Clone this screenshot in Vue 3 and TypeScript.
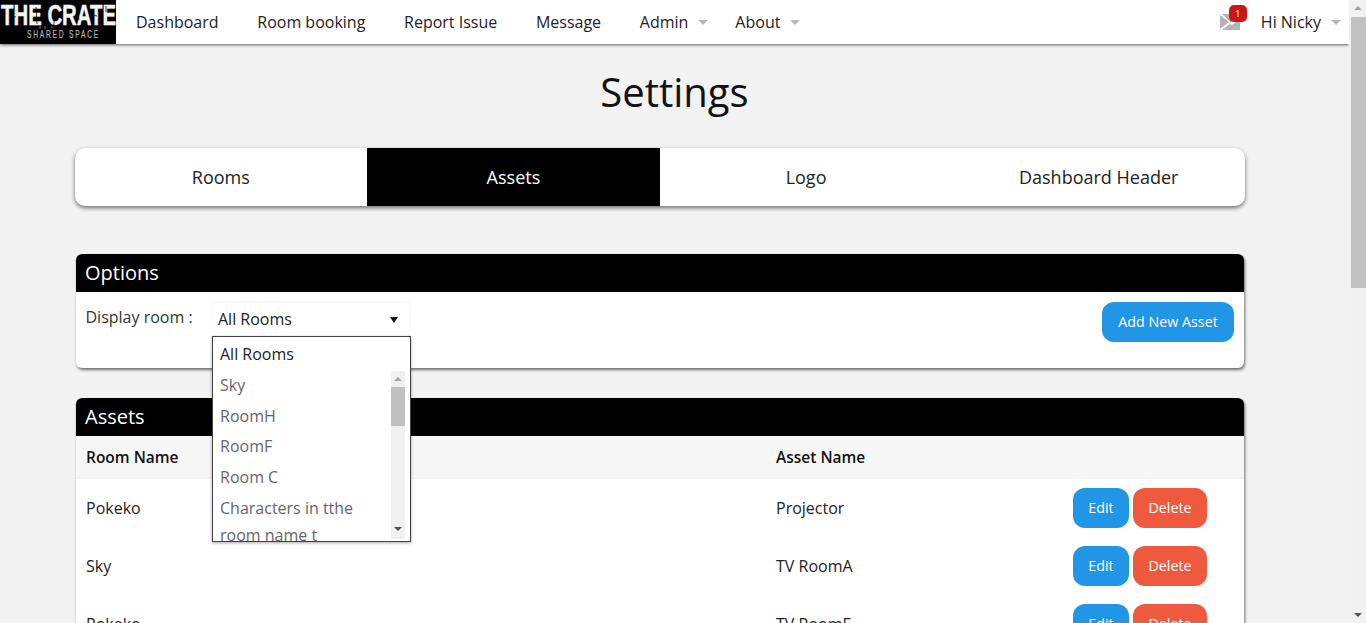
<script setup lang="ts">
const navItems = [
  { label: 'Dashboard', caret: false },
  { label: 'Room booking', caret: false },
  { label: 'Report Issue', caret: false },
  { label: 'Message', caret: false },
  { label: 'Admin', caret: true },
  { label: 'About', caret: true },
]
const tabs = ['Rooms', 'Assets', 'Logo', 'Dashboard Header']
const rooms = ['Sky', 'RoomH', 'RoomF', 'Room C']
const rows = [
  { room: 'Pokeko', asset: 'Projector' },
  { room: 'Sky', asset: 'TV RoomA' },
  { room: 'Pokeko', asset: 'TV RoomE' },
]
</script>

<template>
  <div class="viewport">
    <div class="page">
      <nav class="nav">
        <svg class="logo" width="116" height="44" viewBox="0 0 116 44">
          <rect width="116" height="44" fill="#000" />
          <text x="1" y="25" textLength="115" lengthAdjust="spacingAndGlyphs" class="logo-main">THE CRATE</text>
          <path d="M36 7 L37 24 M44 12 L43 25 M54 18 L54 25 M63 5 L62 13 M77 9 L79 20 M12 16 L16 17 M92 15 L97 16 M106 6 L106 12" stroke="#000" stroke-width="1" opacity="0.75" />
          <path d="M40 26 L40 29 M45 26 L45 29 M52 26 L52 28" stroke="#777" stroke-width="1" />
          <text x="27" y="38" textLength="73" lengthAdjust="spacingAndGlyphs" class="logo-sub">SHARED SPACE</text>
        </svg>
        <ul class="menu">
          <li v-for="item in navItems" :key="item.label" class="menu-item">
            {{ item.label }}<i v-if="item.caret" class="caret"></i>
          </li>
        </ul>
        <div class="user">
          <div class="mail">
            <svg width="20" height="16" viewBox="0 0 20 16">
              <path d="M0 1 L9 8 L0 15 Z M2 0 H20 V2 L11 8.5 Z M2 16 L10 10 L12 11 L20 5 V16 Z" fill="#b4b4b4" />
            </svg>
            <span class="badge">1</span>
          </div>
          <span class="hi">Hi Nicky<i class="caret user-caret"></i></span>
        </div>
      </nav>

      <h1 class="title">Settings</h1>

      <div class="tabs">
        <div v-for="tab in tabs" :key="tab" class="tab" :class="{ active: tab === 'Assets' }">{{ tab }}</div>
      </div>

      <section class="panel options">
        <header class="panel-head">Options</header>
        <div class="options-body">
          <span class="display-label">Display room :</span>
          <div class="select-wrap">
            <div class="select">All Rooms<i class="select-arrow"></i></div>
            <div class="dropdown">
              <div class="dd-first">All Rooms</div>
              <div class="dd-scroll">
                <div class="dd-list">
                  <div v-for="r in rooms" :key="r" class="dd-item">{{ r }}</div>
                  <div class="dd-item dd-wrap">Characters in tthe room name t</div>
                </div>
                <div class="dd-bar">
                  <i class="arrow-up small"></i>
                  <div class="dd-thumb"></div>
                  <i class="arrow-down small"></i>
                </div>
              </div>
            </div>
          </div>
          <button class="btn blue add">Add New Asset</button>
        </div>
      </section>

      <section class="panel assets">
        <header class="panel-head">Assets</header>
        <div class="row thead">
          <span class="col-room">Room Name</span>
          <span class="col-asset">Asset Name</span>
        </div>
        <div v-for="(row, i) in rows" :key="i" class="row">
          <span class="col-room">{{ row.room }}</span>
          <span class="col-asset">{{ row.asset }}</span>
          <span class="actions">
            <button class="btn blue edit">Edit</button>
            <button class="btn red delete">Delete</button>
          </span>
        </div>
      </section>
    </div>

    <div class="scrollbar">
      <i class="arrow-up"></i>
      <div class="thumb"></div>
      <div class="track"></div>
      <i class="arrow-down"></i>
    </div>
  </div>
</template>

<style>
html, body { margin: 0; height: 100%; overflow: hidden; background: #f2f2f2; }
</style>

<style scoped>
.viewport {
  display: flex;
  height: 623px;
  overflow: hidden;
  background: #f2f2f2;
  font-family: "Open Sans", sans-serif;
  font-size: 16px;
  color: #222;
}
.page { width: 1349px; flex: none; overflow: hidden; }

.nav {
  display: flex;
  align-items: center;
  height: 44px;
  background: #fff;
  box-shadow: 0 1px 3px rgba(0, 0, 0, 0.6);
  position: relative;
}
.logo { display: block; flex: none; }
.logo-main {
  font-family: "Liberation Sans", sans-serif;
  font-weight: 700;
  font-size: 29px;
  fill: #f4f4f4;
  stroke: #f4f4f4;
  stroke-width: 0.5px;
}
.logo-sub {
  font-family: "Liberation Sans", sans-serif;
  font-size: 11.5px;
  letter-spacing: 3px;
  fill: #b5b5b5;
  stroke: #b5b5b5;
  stroke-width: 0.2px;
}
.menu {
  display: flex;
  list-style: none;
  margin: 0;
  padding: 0 0 0 20px;
  gap: 38.7px;
}
.menu-item { display: flex; align-items: center; white-space: nowrap; }
.caret {
  display: inline-block;
  width: 0;
  height: 0;
  border-left: 5px solid transparent;
  border-right: 5px solid transparent;
  border-top: 5px solid #b8b8b8;
  margin-left: 9.5px;
  margin-right: -11.2px;
}
.user { margin-left: auto; display: flex; align-items: center; padding-right: 8px; }
.mail { position: relative; width: 20px; height: 16px; margin-right: 21px; }
.mail svg { display: block; }
.badge {
  position: absolute;
  left: 9px;
  top: -9px;
  width: 18px;
  height: 17px;
  border-radius: 5px;
  background: #cc1517;
  color: #fff;
  font-size: 9px;
  line-height: 17px;
  text-align: center;
}
.hi { display: flex; align-items: center; }
.user-caret { margin-left: 10px; margin-right: 0; }

.title {
  margin: 0;
  padding-top: 19px;
  height: 85px;
  box-sizing: border-box;
  text-align: center;
  font-weight: 400;
  font-size: 40px;
  line-height: 58px;
  color: #111;
}

.tabs {
  display: flex;
  width: 1170.5px;
  height: 58px;
  margin: 19px 0 0 74.5px;
  background: #fff;
  border-radius: 10px;
  box-shadow: 0 2px 4px rgba(0, 0, 0, 0.55);
  overflow: hidden;
  font-size: 18px;
}
.tab {
  flex: 1;
  display: flex;
  align-items: center;
  justify-content: center;
  color: #222;
}
.tab.active { background: #000; color: #fff; }

.panel {
  width: 1168px;
  margin-left: 76px;
  background: #fff;
  border-radius: 6px;
  box-shadow: 1px 2px 3px rgba(0, 0, 0, 0.55);
}
.panel-head {
  height: 38px;
  background: #000;
  color: #fff;
  border-radius: 6px 6px 0 0;
  font-size: 20px;
  line-height: 38px;
  padding-left: 9px;
}
.options { margin-top: 48px; height: 114px; position: relative; z-index: 2; }
.options-body { position: relative; display: flex; padding: 10px 10px 10px 9.5px; }
.display-label { width: 126.5px; line-height: 30px; color: #333; }
.select-wrap { position: relative; width: 199px; height: 33px; margin-top: 1px; }
.select {
  height: 33px;
  line-height: 33px;
  margin: 0 1px;
  padding-left: 5px;
  background: #fff;
  border-radius: 3px;
  box-shadow: 0 0 2px rgba(0, 0, 0, 0.12);
  position: relative;
  box-sizing: border-box;
}
.select-arrow {
  position: absolute;
  right: 12px;
  top: 14px;
  border-left: 4px solid transparent;
  border-right: 4px solid transparent;
  border-top: 6px solid #111;
}
.dropdown {
  position: absolute;
  left: 0;
  top: 33px;
  width: 199px;
  height: 206px;
  box-sizing: border-box;
  background: #fff;
  border: 1px solid #444;
  box-shadow: 0 1px 3px rgba(0, 0, 0, 0.35);
  overflow: hidden;
}
.dd-first { height: 33px; line-height: 35px; padding-left: 7px; color: #222; }
.dd-scroll { display: flex; height: 171px; }
.dd-list { flex: 1; overflow: hidden; color: #666; padding-left: 7px; }
.dd-item { height: 30.6px; line-height: 30.6px; }
.dd-wrap { height: auto; line-height: 27px; padding-top: 3px; width: 150px; }
.dd-bar {
  width: 14px;
  margin: 1px 5px 2px 0;
  background: #f0f0f0;
  display: flex;
  flex-direction: column;
  align-items: center;
  position: relative;
}
.dd-thumb { width: 14px; height: 39px; margin-top: 16px; background: #c0c0c0; }
.arrow-up, .arrow-down {
  position: absolute;
  width: 0;
  height: 0;
  border-left: 4px solid transparent;
  border-right: 4px solid transparent;
}
.arrow-up { top: 6px; border-bottom: 4px solid #a3a3a3; }
.arrow-down { bottom: 6px; border-top: 4px solid #505050; }
.arrow-up.small { top: 6px; }
.arrow-down.small { bottom: 8px; }

.btn {
  border: none;
  color: #fff;
  font-family: inherit;
  font-size: 14.3px;
  height: 40px;
  padding: 0 0 2px;
  border-radius: 12px;
}
.blue { background: #2196e6; }
.red { background: #ef5a3f; }
.add { width: 132px; margin-left: auto; }
.edit { width: 56px; }
.delete { width: 74px; margin-left: 4px; }

.assets { margin-top: 30px; height: 400px; }
.row {
  display: flex;
  align-items: center;
  height: 58px;
  padding-left: 10px;
  position: relative;
}
.thead {
  height: 42px;
  background: #f7f7f7;
  font-weight: 600;
  font-size: 15.5px;
  color: #111;
  border-bottom: 1px solid #f2f2f2;
}
.col-room { width: 690px; flex: none; }
.col-asset { width: 297px; flex: none; }
.actions { display: flex; }

.scrollbar {
  flex: none;
  width: 17px;
  position: relative;
  display: flex;
  flex-direction: column;
  align-items: flex-end;
  background: #f1f1f1;
}
.thumb { width: 15px; height: 271px; margin-top: 17px; background: #c1c1c1; }
.track { flex: 1; }
.scrollbar .arrow-up { left: 5px; }
.scrollbar .arrow-down { left: 5px; }
</style>
